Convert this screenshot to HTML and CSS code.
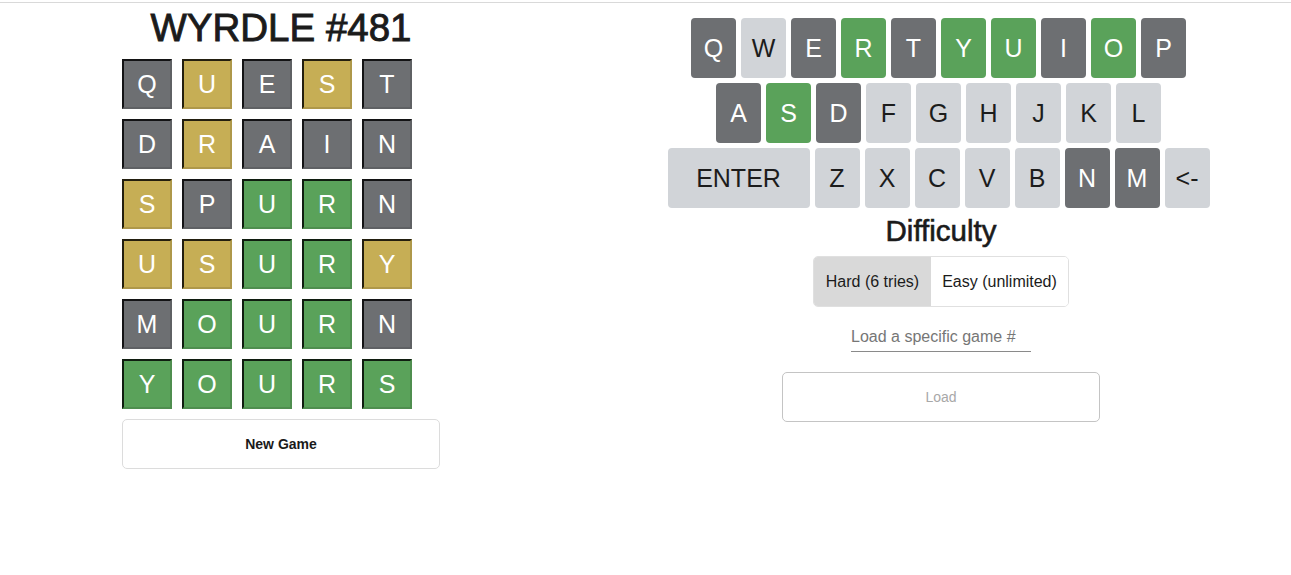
FILE: index.html
```html
<!DOCTYPE html>
<html lang="en">
<head>
<meta charset="utf-8">
<title>Wyrdle</title>
<link rel="stylesheet" href="styles.css">
</head>
<body>
<div class="topline"></div>
<main class="app">
  <section class="left">
    <div class="panel">
      <h1 class="title">WYRDLE #481</h1>
      <div class="board">
        <div class="tile gray">Q</div><div class="tile yellow">U</div><div class="tile gray">E</div><div class="tile yellow">S</div><div class="tile gray">T</div>
        <div class="tile gray">D</div><div class="tile yellow">R</div><div class="tile gray">A</div><div class="tile gray">I</div><div class="tile gray">N</div>
        <div class="tile yellow">S</div><div class="tile gray">P</div><div class="tile green">U</div><div class="tile green">R</div><div class="tile gray">N</div>
        <div class="tile yellow">U</div><div class="tile yellow">S</div><div class="tile green">U</div><div class="tile green">R</div><div class="tile yellow">Y</div>
        <div class="tile gray">M</div><div class="tile green">O</div><div class="tile green">U</div><div class="tile green">R</div><div class="tile gray">N</div>
        <div class="tile green">Y</div><div class="tile green">O</div><div class="tile green">U</div><div class="tile green">R</div><div class="tile green">S</div>
      </div>
      <button class="btn btn-new">New Game</button>
    </div>
  </section>
  <section class="right">
    <div class="keyboard">
      <div class="krow">
        <button class="key dark">Q</button><button class="key">W</button><button class="key dark">E</button><button class="key green">R</button><button class="key dark">T</button><button class="key green">Y</button><button class="key green">U</button><button class="key dark">I</button><button class="key green">O</button><button class="key dark">P</button>
      </div>
      <div class="krow">
        <button class="key dark">A</button><button class="key green">S</button><button class="key dark">D</button><button class="key">F</button><button class="key">G</button><button class="key">H</button><button class="key">J</button><button class="key">K</button><button class="key">L</button>
      </div>
      <div class="krow">
        <button class="key wide">ENTER</button><button class="key">Z</button><button class="key">X</button><button class="key">C</button><button class="key">V</button><button class="key">B</button><button class="key dark">N</button><button class="key dark">M</button><button class="key">&lt;-</button>
      </div>
    </div>
    <h3 class="diff">Difficulty</h3>
    <div class="seg">
      <button class="seg-btn hard active">Hard (6 tries)</button><button class="seg-btn easy">Easy (unlimited)</button>
    </div>
    <input class="game-input" type="text" placeholder="Load a specific game #">
    <button class="btn btn-load" disabled>Load</button>
  </section>
</main>
</body>
</html>
```
FILE: styles.css
```css
* { box-sizing: border-box; }
html, body { margin: 0; padding: 0; background: #fff; }
body {
  font-family: "Liberation Sans", Arial, Helvetica, sans-serif;
  color: #212529;
}
.topline {
  margin-top: 2px;
  height: 1px;
  background: #d9d9d9;
}
.app {
  display: flex;
  align-items: flex-start;
}
.left {
  width: 562px;
  display: flex;
  justify-content: center;
}
.panel {
  width: 318px;
  display: flex;
  flex-direction: column;
}
.title {
  margin: 2px 0 8px;
  font-size: 38.5px;
  line-height: 46px;
  font-weight: 400;
  text-align: center;
  color: #1b1b1b;
  -webkit-text-stroke: 0.9px #1b1b1b;
}
.board {
  display: grid;
  grid-template-columns: repeat(5, 50px);
  grid-auto-rows: 50px;
  gap: 10px;
}
.tile {
  display: flex;
  align-items: center;
  justify-content: center;
  color: #fff;
  font-size: 25px;
  border-style: solid;
  border-width: 2px;
  border-color: rgba(0,0,0,0.82) rgba(0,0,0,0.12) rgba(0,0,0,0.12) rgba(0,0,0,0.82);
}
.tile.gray { background: #6d6f72; }
.tile.yellow { background: #c6ae55; }
.tile.green { background: #5aa25a; }
.btn {
  font-family: inherit;
  background: #fff;
  border-radius: 5px;
  height: 50px;
  width: 318px;
  cursor: pointer;
}
.btn-new {
  margin-top: 10px;
  border: 1px solid #dcdcdc;
  font-size: 14px;
  font-weight: 700;
  color: #1a1a1a;
}
.right {
  flex: 1;
  margin-left: 29px;
  display: flex;
  flex-direction: column;
  align-items: center;
}
.keyboard {
  margin-top: 15px;
  margin-right: 5px;
  display: flex;
  flex-direction: column;
  align-items: center;
  gap: 5px;
}
.krow {
  display: flex;
  gap: 5px;
}
.key {
  width: 45px;
  height: 60px;
  border: none;
  border-radius: 4px;
  background: #d1d4d8;
  color: #1c1c1c;
  font-family: inherit;
  font-size: 25px;
  padding: 0;
  display: flex;
  align-items: center;
  justify-content: center;
}
.key.wide { width: 142px; }
.key.dark { background: #6d6f72; color: #fff; }
.key.green { background: #5aa25a; color: #fff; }
.diff {
  margin: 6px 0 8px;
  font-size: 29.5px;
  line-height: 34px;
  font-weight: 400;
  color: #1b1b1b;
  -webkit-text-stroke: 0.6px #1b1b1b;
}
.seg {
  display: flex;
  height: 51px;
  border: 1px solid #e0e0e0;
  border-radius: 5px;
  overflow: hidden;
}
.seg-btn {
  border: none;
  background: #fff;
  font-family: inherit;
  font-size: 16px;
  color: #1b1b1b;
  padding: 0;
  text-align: center;
}
.seg-btn.hard { width: 117px; }
.seg-btn.easy { width: 137px; }
.seg-btn.active { background: #d9d9d9; }
.game-input {
  margin-top: 15px;
  width: 180px;
  height: 30px;
  border: none;
  border-bottom: 1px solid #8a8a8a;
  padding: 0;
  font-family: inherit;
  font-size: 16px;
  outline: none;
  background: transparent;
}
.game-input::placeholder { color: #767676; }
.btn-load {
  margin-top: 20px;
  border: 1px solid #c4c4c4;
  font-size: 14px;
  color: #a8a8a8;
}
```
